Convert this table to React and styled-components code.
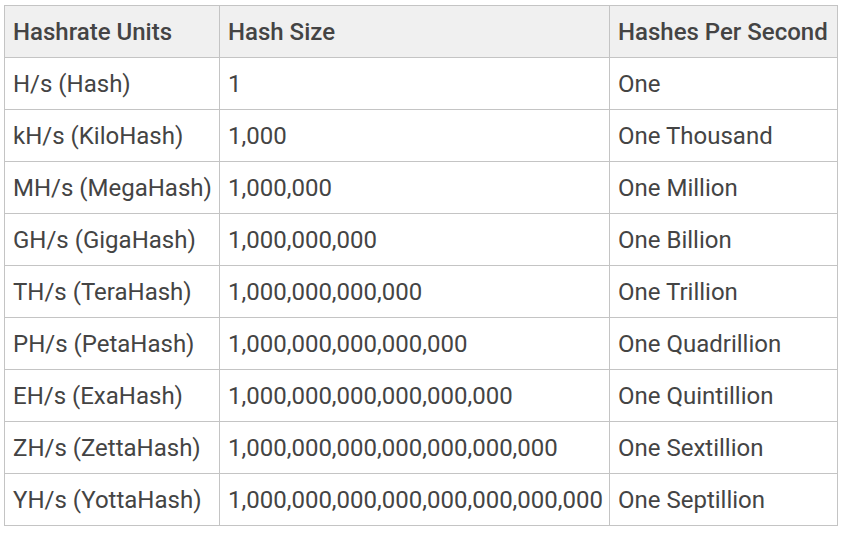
import React from "react";
import styled, { createGlobalStyle } from "styled-components";

const Global = createGlobalStyle`
  html, body { margin: 0; padding: 0; background: #fff; }
  body { font-family: Roboto, "Liberation Sans", sans-serif; }
`;

const Wrap = styled.div`
  padding: 5px 0 0 4px;
`;

const Table = styled.table`
  border-collapse: collapse;
  table-layout: fixed;
  width: 833px;
  color: #444;
  font-size: 24px;
`;

const Th = styled.th`
  background: #f0f0f0;
  border: 1px solid #c4c4c4;
  height: 52px;
  padding: 0 8px;
  text-align: left;
  font-weight: 500;
  white-space: nowrap;
  box-sizing: border-box;
`;

const Td = styled.td`
  border: 1px solid #c4c4c4;
  height: 52px;
  padding: 0 8px;
  white-space: nowrap;
  box-sizing: border-box;
`;

const rows = [
  ["H/s (Hash)", "1", "One"],
  ["kH/s (KiloHash)", "1,000", "One Thousand"],
  ["MH/s (MegaHash)", "1,000,000", "One Million"],
  ["GH/s (GigaHash)", "1,000,000,000", "One Billion"],
  ["TH/s (TeraHash)", "1,000,000,000,000", "One Trillion"],
  ["PH/s (PetaHash)", "1,000,000,000,000,000", "One Quadrillion"],
  ["EH/s (ExaHash)", "1,000,000,000,000,000,000", "One Quintillion"],
  ["ZH/s (ZettaHash)", "1,000,000,000,000,000,000,000", "One Sextillion"],
  ["YH/s (YottaHash)", "1,000,000,000,000,000,000,000,000", "One Septillion"],
];

export default function App() {
  return (
    <Wrap>
      <Global />
      <Table>
        <colgroup>
          <col style={{ width: 215 }} />
          <col style={{ width: 390 }} />
          <col style={{ width: 228 }} />
        </colgroup>
        <thead>
          <tr>
            <Th>Hashrate Units</Th>
            <Th>Hash Size</Th>
            <Th>Hashes Per Second</Th>
          </tr>
        </thead>
        <tbody>
          {rows.map((r) => (
            <tr key={r[0]}>
              {r.map((c, i) => (
                <Td key={i}>{c}</Td>
              ))}
            </tr>
          ))}
        </tbody>
      </Table>
    </Wrap>
  );
}
